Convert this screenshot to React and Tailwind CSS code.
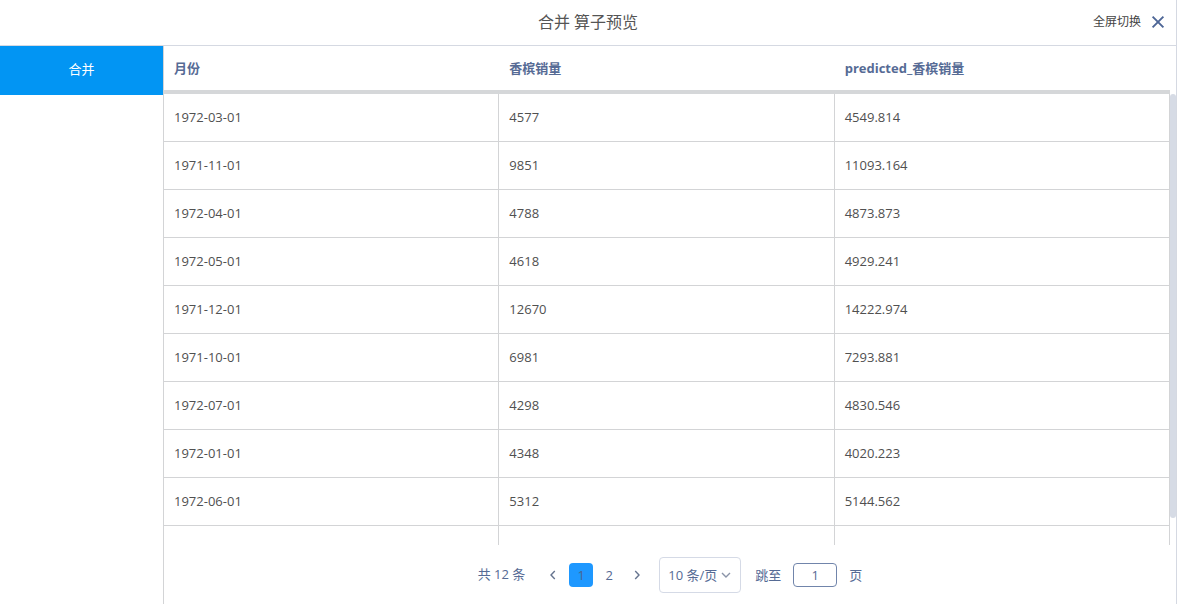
import React, { useState } from "react";

const columns = ["月份", "香槟销量", "predicted_香槟销量"];

const rows = [
  ["1972-03-01", "4577", "4549.814"],
  ["1971-11-01", "9851", "11093.164"],
  ["1972-04-01", "4788", "4873.873"],
  ["1972-05-01", "4618", "4929.241"],
  ["1971-12-01", "12670", "14222.974"],
  ["1971-10-01", "6981", "7293.881"],
  ["1972-07-01", "4298", "4830.546"],
  ["1972-01-01", "4348", "4020.223"],
  ["1972-06-01", "5312", "5144.562"],
  ["", "", ""],
];

function Chevron({ d, className }) {
  return (
    <svg viewBox="0 0 10 10" className={className} fill="none" stroke="currentColor" strokeWidth="1.4" aria-hidden="true">
      <path d={d} />
    </svg>
  );
}

function Header() {
  return (
    <header className="grid h-[46px] shrink-0 grid-cols-[1fr_auto_1fr] items-center border-b border-[#d5d9e2]">
      <h1 className="col-start-2 pb-0.5 text-base leading-6 text-[#555]">合并 算子预览</h1>
      <div className="flex items-center justify-end gap-2.5 pr-[11px] pb-0.5">
        <button type="button" className="text-xs text-[#444]">全屏切换</button>
        <button type="button" aria-label="关闭" className="text-[#4d6696]">
          <svg viewBox="0 0 14 14" className="size-3.5" fill="none" stroke="currentColor" strokeWidth="1.9" aria-hidden="true">
            <path d="M1.6 1.6 12.4 12.4M12.4 1.6 1.6 12.4" />
          </svg>
        </button>
      </div>
    </header>
  );
}

function DataTable() {
  return (
    <div className="flex min-h-0 flex-1">
      <div className="min-w-0 flex-1 overflow-hidden">
        <table className="w-full table-fixed border-separate border-spacing-0 text-left">
          <thead>
            <tr>
              {columns.map((name) => (
                <th key={name} className="h-12 border-b-4 border-[#d5d7d9] px-2.5 font-bold text-[#566b95]">
                  {name}
                </th>
              ))}
            </tr>
          </thead>
          <tbody>
            {rows.map((row, r) => (
              <tr key={r}>
                {row.map((value, c) => (
                  <td key={c} className="h-12 border-r border-b border-[#d3d4d6] px-2.5 pb-0.5 text-[#505050]">
                    {value}
                  </td>
                ))}
              </tr>
            ))}
          </tbody>
        </table>
      </div>
      <div className="w-1.5 shrink-0 pt-12">
        <div className="h-[94%] rounded-sm bg-[#d6dbe5]" />
      </div>
    </div>
  );
}

function Pagination() {
  const [page, setPage] = useState("1");
  return (
    <nav aria-label="分页" className="flex h-[59px] shrink-0 items-center justify-center text-[#566b95]">
      <span className="pb-0.5">共 12 条</span>
      <button type="button" aria-label="上一页" className="ml-4 flex size-6 items-center justify-center text-[#66748f]">
        <Chevron d="M6.8 1 3 5l3.8 4" className="size-2.5" />
      </button>
      <button type="button" aria-current="page" className="ml-1 size-6 rounded-sm bg-[#1e98ff] text-[#4a648f]">1</button>
      <button type="button" className="ml-1 size-6">2</button>
      <button type="button" aria-label="下一页" className="ml-1 flex size-6 items-center justify-center text-[#66748f]">
        <Chevron d="M3.2 1 7 5 3.2 9" className="size-2.5" />
      </button>
      <div className="ml-2.5 grid items-center">
        <select
          aria-label="每页条数"
          className="col-start-1 row-start-1 h-9 w-[82px] appearance-none rounded-sm border border-[#d5dae6] bg-white pl-2"
        >
          <option>10 条/页</option>
        </select>
        <Chevron d="M1 3l4 4 4-4" className="pointer-events-none col-start-1 row-start-1 mr-2.5 size-2.5 justify-self-end text-[#8a94a8]" />
      </div>
      <label className="ml-3.5 flex items-center gap-3">
        跳至
        <input
          type="text"
          value={page}
          onChange={(e) => setPage(e.target.value)}
          className="h-6 w-11 rounded-sm border border-[#7185ab] text-center"
        />
        页
      </label>
    </nav>
  );
}

export default function App() {
  return (
    <div className="flex h-screen flex-col overflow-hidden border-r border-[#d5d9e2] bg-white font-['Open_Sans','Noto_Sans_CJK_SC',sans-serif] text-[13px] leading-5">
      <Header />
      <div className="flex min-h-0 flex-1">
        <aside className="w-[163px] shrink-0">
          <button type="button" className="h-[49px] w-full bg-[#0295f3] pb-1 text-white">合并</button>
        </aside>
        <main className="flex min-w-0 flex-1 flex-col border-l border-[#d3d4d6]">
          <DataTable />
          <Pagination />
        </main>
      </div>
    </div>
  );
}
